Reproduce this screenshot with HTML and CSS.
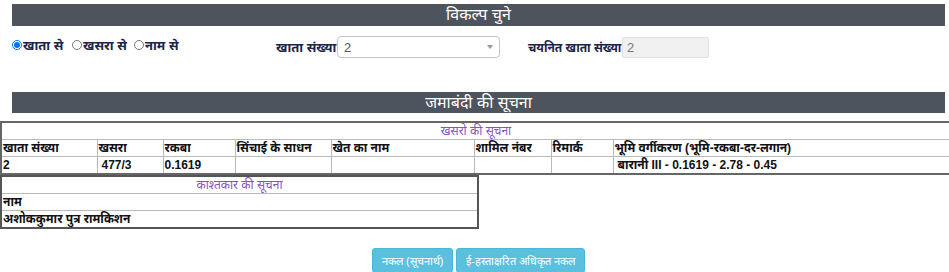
FILE: index.html
```html
<!DOCTYPE html>
<html lang="hi">
<head>
<meta charset="utf-8">
<title>जमाबंदी</title>
<link rel="stylesheet" href="styles.css">
</head>
<body>
<div class="bar bar-top">विकल्प चुने</div>
<div class="options">
  <div class="radios">
    <label class="radio r1"><input type="radio" name="opt" checked>खाता से</label>
    <label class="radio r2"><input type="radio" name="opt">खसरा से</label>
    <label class="radio r3"><input type="radio" name="opt">नाम से</label>
  </div>
  <span class="field-label">खाता संख्या</span>
  <div class="select"><span class="select-val">2</span><span class="caret"></span></div>
  <span class="field-label2">चयनित खाता संख्या</span>
  <div class="readonly">2</div>
</div>
<div class="bar bar-second">जमाबंदी की सूचना</div>
<table class="grid khasra">
  <colgroup>
    <col class="c1"><col class="c2"><col class="c3"><col class="c4"><col class="c5"><col class="c6"><col class="c7"><col>
  </colgroup>
  <tr><td colspan="8" class="caption">खसरो की सूचना</td></tr>
  <tr class="head">
    <td>खाता संख्या</td><td>खसरा</td><td>रकबा</td><td>सिंचाई के साधन</td><td>खेत का नाम</td><td>शामिल नंबर</td><td>रिमार्क</td><td>भूमि वर्गीकरण (भूमि-रकबा-दर-लगान)</td>
  </tr>
  <tr class="data">
    <td>2</td><td class="lead">477/3</td><td>0.1619</td><td></td><td></td><td></td><td></td><td class="lead">बारानी III - 0.1619 - 2.78 - 0.45</td>
  </tr>
</table>
<table class="grid owner">
  <tr><td class="caption">काश्तकार की सूचना</td></tr>
  <tr class="head"><td>नाम</td></tr>
  <tr class="data"><td>अशोककुमार पुत्र रामकिशन</td></tr>
</table>
<div class="actions">
  <button class="btn">नकल (सूचनार्थ)</button>
  <button class="btn">ई-हस्ताक्षरित अधिकृत नकल</button>
</div>
</body>
</html>
```

FILE: styles.css
```css
html, body {
  margin: 0;
  padding: 0;
  overflow: hidden;
  background: #fff;
}
body {
  font-family: "Liberation Sans", Arial, "Noto Sans", sans-serif;
  color: #111;
  width: 949px;
}
.bar {
  background: #4d545e;
  color: #fff;
  text-align: center;
  font-size: 16px;
  line-height: 22px;
  height: 22px;
  margin: 0 4px 0 12px;
}
.bar-top {
  margin-top: 4px;
}
.bar-second {
  margin-top: 34px;
  height: 21px;
  line-height: 21px;
}
.options {
  display: flex;
  align-items: center;
  height: 22px;
  margin-top: 10px;
  padding-left: 12px;
}
.radios {
  display: flex;
  align-items: center;
  width: 264px;
  margin-top: -4px;
}
.radio {
  display: flex;
  align-items: center;
  font-size: 13px;
  font-weight: bold;
  color: #1c2448;
}
.radio input {
  width: 10px;
  height: 10px;
  margin: 0 1px 0 0;
}
.r1 { width: 60px; }
.r2 { width: 62px; }
.field-label {
  font-size: 13px;
  font-weight: bold;
  color: #1c2448;
  width: 61px;
}
.select {
  width: 161px;
  height: 20px;
  border: 1px solid #c4c4c4;
  border-radius: 4px;
  display: flex;
  align-items: center;
  justify-content: space-between;
  padding: 0 6px 0 6px;
  box-sizing: content-box;
  margin-left: 0;
  width: 149px;
}
.select-val {
  font-size: 13px;
  color: #555;
}
.caret {
  width: 0;
  height: 0;
  border-left: 3px solid transparent;
  border-right: 3px solid transparent;
  border-top: 4px solid #999;
}
.field-label2 {
  font-size: 12px;
  font-weight: bold;
  color: #1c2448;
  margin-left: 28px;
  width: 94px;
}
.readonly {
  width: 81px;
  height: 19px;
  border: 1px solid #e0e0e0;
  background: #f0f0f0;
  font-size: 13px;
  color: #777;
  padding-left: 4px;
  line-height: 19px;
  border-radius: 2px;
}
.grid {
  border-collapse: collapse;
  font-size: 12px;
  font-weight: bold;
}
.grid td {
  border: 1px solid #b9b9b9;
  padding: 0 1px;
  height: 16px;
  line-height: 15px;
  text-align: left;
  white-space: nowrap;
}
.grid td.caption {
  text-align: center;
  font-style: italic;
  font-weight: normal;
  color: #8a4fc4;
}
.khasra {
  margin-top: 8px;
  width: 952px;
  border: 2px solid #666;
  table-layout: fixed;
}
.khasra .c1 { width: 96px; }
.khasra .c2 { width: 66px; }
.khasra .c3 { width: 72px; }
.khasra .c4 { width: 96px; }
.khasra .c5 { width: 143px; }
.khasra .c6 { width: 77px; }
.khasra .c7 { width: 62px; }
.grid td.lead {
  padding-left: 4px;
}
.owner {
  width: 479px;
  border: 2px solid #555;
}
.actions {
  display: flex;
  justify-content: center;
  gap: 3px;
  margin-top: 19px;
  padding-left: 8px;
}
.btn {
  background: #5bc0de;
  border: 1px solid #46b8da;
  color: #fff;
  font-family: "Liberation Sans", Arial, sans-serif;
  font-size: 11px;
  height: 25px;
  padding: 0 9px;
  border-radius: 3px;
}
```
